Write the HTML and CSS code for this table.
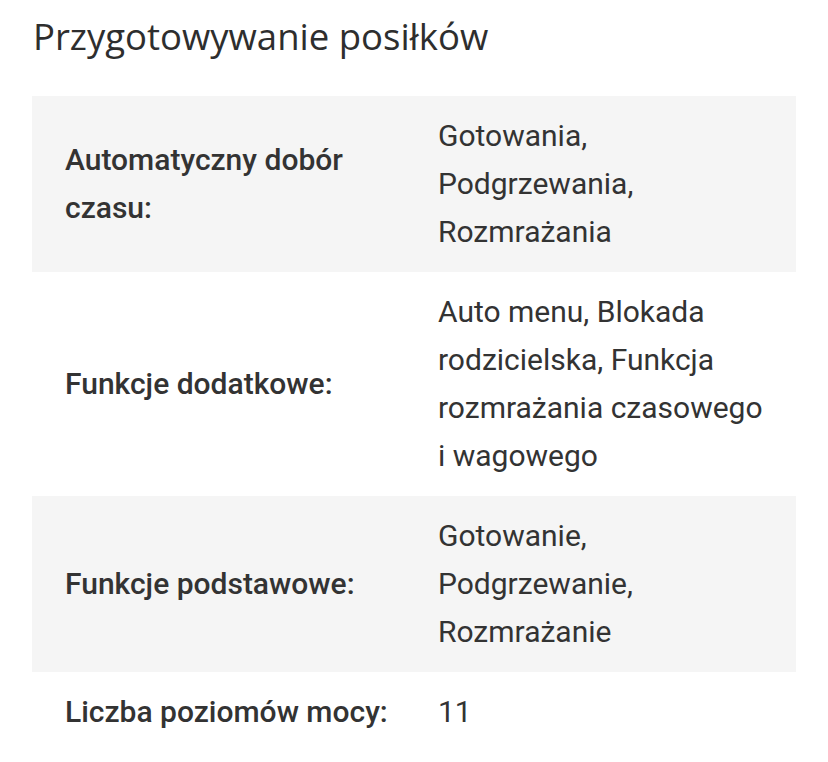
FILE: index.html
```html
<!DOCTYPE html>
<html lang="pl">
<head>
<meta charset="utf-8">
<link rel="stylesheet" href="styles.css">
</head>
<body>
<section class="specs">
  <h2 class="specs-title">Przygotowywanie posiłków</h2>
  <table class="specs-table">
    <tr class="row row-alt">
      <th class="label">Automatyczny dobór czasu:</th>
      <td class="value">Gotowania, Podgrzewania, Rozmrażania</td>
    </tr>
    <tr class="row">
      <th class="label">Funkcje dodatkowe:</th>
      <td class="value">Auto menu, Blokada rodzicielska, Funkcja rozmrażania czasowego i wagowego</td>
    </tr>
    <tr class="row row-alt">
      <th class="label">Funkcje podstawowe:</th>
      <td class="value">Gotowanie, Podgrzewanie, Rozmrażanie</td>
    </tr>
    <tr class="row">
      <th class="label">Liczba poziomów mocy:</th>
      <td class="value">11</td>
    </tr>
  </table>
</section>
</body>
</html>
```
FILE: styles.css
```css
html, body {
  margin: 0;
  padding: 0;
  background: #ffffff;
}
.specs {
  padding: 12px 32px 0 32px;
  color: #333333;
}
.specs-title {
  margin: 0 0 36px 1px;
  font-family: "Open Sans", "Noto Sans", sans-serif;
  font-weight: 400;
  font-size: 36.5px;
  line-height: 48px;
  color: #2e2e2e;
}
.specs-table {
  width: 764px;
  table-layout: fixed;
  border-collapse: collapse;
  font-family: Roboto, "Noto Sans", sans-serif;
  font-size: 30px;
  line-height: 48px;
}
.row-alt {
  background: #f5f5f5;
}
.label {
  width: 325px;
  padding: 16px 16px 16px 33px;
  text-align: left;
  font-weight: 500;
  vertical-align: middle;
}
.value {
  padding: 16px 32px 16px 32px;
  font-weight: 400;
  vertical-align: middle;
}
```
